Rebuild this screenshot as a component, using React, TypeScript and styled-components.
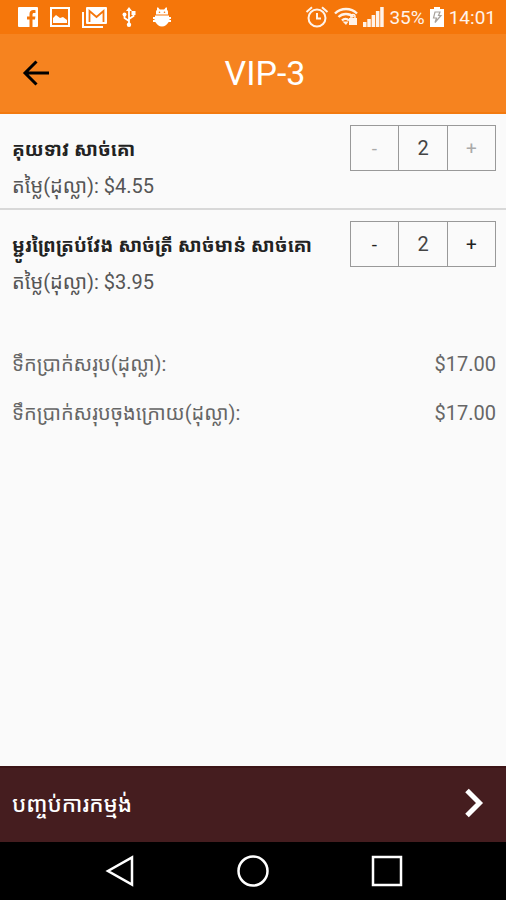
import React, { useState } from "react";
import styled, { createGlobalStyle } from "styled-components";

const GlobalStyle = createGlobalStyle`
  *, *::before, *::after { box-sizing: border-box; }
  html, body { margin: 0; padding: 0; }
  body {
    background: #fafafa;
    color: #555;
    font-family: Roboto, "Noto Sans Khmer", "Noto Sans", sans-serif;
  }
  button { font-family: inherit; cursor: pointer; }
`;

const Screen = styled.div`
  display: flex;
  flex-direction: column;
  min-height: 100vh;
`;

const StatusBar = styled.div`
  display: flex;
  align-items: center;
  justify-content: space-between;
  height: 34px;
  padding: 0 10px 0 18px;
  background: #f5760a;
  color: #fff3ea;
  font-size: 19px;
`;

const Notifications = styled.div`
  display: flex;
  align-items: center;
  gap: 12px;
`;

const SystemStatus = styled.div`
  display: flex;
  align-items: center;
  gap: 5px;
`;

const AppBar = styled.header`
  display: grid;
  grid-template-columns: 48px 1fr 24px;
  align-items: center;
  height: 80px;
  padding: 0 12px;
  background: #f6831f;
  border-bottom: 2px solid #f37a0f;
`;

const BackButton = styled.button`
  display: flex;
  align-items: center;
  justify-content: center;
  height: 48px;
  padding: 0;
  border: 0;
  background: none;
  color: #000;
`;

const Title = styled.h1`
  margin: 0;
  color: #fff;
  font-size: 34px;
  font-weight: 400;
  line-height: 40px;
  text-align: center;
`;

const Content = styled.main`
  flex: 1;
`;

const ItemList = styled.ul`
  margin: 0;
  padding: 0;
  list-style: none;
`;

const Item = styled.li`
  display: flex;
  align-items: flex-start;
  justify-content: space-between;
  height: 96px;
  padding: 11px 10px 0 12px;

  &:not(:last-child) { border-bottom: 2px solid #d8d8d8; }
`;

const ItemName = styled.h2`
  margin: 7px 0 0;
  color: #222;
  font-size: 19px;
  font-weight: 700;
  line-height: 36px;
  white-space: nowrap;
`;

const ItemPrice = styled.p`
  margin: 0;
  font-size: 20px;
  line-height: 36px;
`;

const Stepper = styled.div`
  display: flex;
  height: 46px;
  border: 1px solid #999;
`;

const StepButton = styled.button`
  width: 47px;
  padding: 0;
  border: 0;
  background: none;
  color: #222;
  font-size: 19px;

  &:disabled { color: #aaa; cursor: default; }
`;

const Quantity = styled.output`
  display: flex;
  align-items: center;
  justify-content: center;
  width: 50px;
  border: solid #999;
  border-width: 0 1px;
  color: #444;
  font-size: 20px;
`;

const Totals = styled.dl`
  display: flex;
  flex-direction: column;
  gap: 13px;
  margin: 0;
  padding: 40px 10px 0 12px;
  color: #666;
  font-size: 20px;
  line-height: 36px;
`;

const TotalRow = styled.div`
  display: flex;
  justify-content: space-between;
`;

const Amount = styled.dd`
  margin: 0;
`;

const FinishButton = styled.button`
  display: flex;
  align-items: center;
  justify-content: space-between;
  height: 76px;
  padding: 0 21px 4px 12px;
  border: 0;
  border-top: 2px solid #3c1416;
  background: #451d1f;
  color: #fff;
  font-size: 22px;
  font-weight: 500;
`;

const NavBar = styled.nav`
  display: flex;
  align-items: center;
  justify-content: center;
  gap: 86px;
  height: 58px;
  background: #000;
`;

const NavButton = styled.button`
  display: flex;
  align-items: center;
  justify-content: center;
  width: 48px;
  height: 48px;
  padding: 0;
  border: 0;
  background: none;
`;

const FacebookIcon = () => (
  <svg width="20" height="20" viewBox="0 0 20 20" aria-hidden="true">
    <path fill="#fff" d="M1 0h18a1 1 0 0 1 1 1v18a1 1 0 0 1-1 1h-4.500v-7.500h2.500l.4-3h-2.900V7.500c0-.9.400-1.500 1.500-1.500h1.500V3.300c-.4-.1-1.200-.2-2.100-.2-2.300 0-3.900 1.400-3.900 3.900v2.500H9v3h2.500V20H1a1 1 0 0 1-1-1V1a1 1 0 0 1 1-1z" />
  </svg>
);

const GalleryIcon = () => (
  <svg width="20" height="20" viewBox="0 0 20 20" aria-hidden="true">
    <rect x="1" y="1" width="18" height="18" fill="none" stroke="#fff" strokeWidth="2" />
    <path fill="#fff" d="M3 16v-5l3-3 4 3 3-1 4 3v3z" />
  </svg>
);

const MailIcon = () => (
  <svg width="25" height="21" viewBox="0 0 25 21" aria-hidden="true">
    <path d="M1 5v15h20" fill="none" stroke="#fff" strokeWidth="2" />
    <rect x="4" y="0" width="21" height="17" rx="1" fill="#fff" />
    <path d="M7.500 15V4l7 6 7-6v11" fill="none" stroke="#f5760a" strokeWidth="1.800" />
  </svg>
);

const UsbIcon = () => (
  <svg width="20" height="20" viewBox="-3 0 20 20" aria-hidden="true">
    <path d="M7 3v15M7 14L2.500 11V8M7 12l4.500-3V6" fill="none" stroke="#fff" strokeWidth="1.800" />
    <path d="M7 0l3 4H4z" fill="#fff" />
    <circle cx="2.500" cy="7.500" r="2" fill="#fff" />
    <rect x="9.500" y="4" width="4" height="4" fill="#fff" />
    <circle cx="7" cy="17.800" r="2.200" fill="#fff" />
  </svg>
);

const DebugIcon = () => (
  <svg width="22" height="20" viewBox="-2 0 22 20" aria-hidden="true">
    <path fill="#fff" d="M3 7.500V5c0-1 .4-1.600 1-2V.5h1.200L6.800 2.500h4.400L12.800.5H14V3c.6.4 1 1 1 2v2.500z" />
    <path fill="#fff" d="M2 8.500h14V10h2v2h-1.500v1H18v2h-2.300C14 17.500 12 19.500 9 19.500S4 17.500 2.300 15H0v-2h1.500v-1H0v-2h2z" />
    <circle cx="6.500" cy="5.200" r=".8" fill="#f5760a" />
    <circle cx="11.500" cy="5.200" r=".8" fill="#f5760a" />
  </svg>
);

const AlarmIcon = () => (
  <svg width="24" height="22" viewBox="0 0 24 22" fill="none" stroke="#fff3ea" strokeWidth="2" aria-hidden="true">
    <circle cx="12" cy="12" r="8.500" />
    <path d="M12 7v5.500h4M1.500 6L7 1.200M22.500 6L17 1.200" />
  </svg>
);

const WifiIcon = () => (
  <svg width="24" height="20" viewBox="0 0 24 20" aria-hidden="true">
    <path d="M1 6.500c6-6 16-6 22 0M4.500 10c4-4 11-4 15 0M8 13.500c2-2 5-2 7 0" fill="none" stroke="#fff3ea" strokeWidth="2.400" />
    <path d="M8.500 14.500h6L12 18z" fill="#fff3ea" />
    <rect x="15" y="11" width="8" height="7" fill="#fff3ea" />
    <path d="M17 11.500V9.500a2 2 0 0 1 4 0v2" fill="none" stroke="#fff3ea" strokeWidth="1.500" />
  </svg>
);

const SignalIcon = () => (
  <svg width="21" height="20" viewBox="0 0 21 20" fill="#fff3ea" aria-hidden="true">
    <path d="M0 15h3.500v5H0zM4.300 12h3.500v8H4.300zM8.600 8h3.500v12H8.600zM12.900 4h3.500v16h-3.500zM17.200 0h3.500v20h-3.500z" />
  </svg>
);

const BatteryIcon = () => (
  <svg width="14" height="20" viewBox="0 0 14 20" aria-hidden="true">
    <path fill="#fff" d="M4 0h6v2h4v18H0V2h4z" />
    <path d="M5 5h5L8.500 8.500H11L5 15.500 6.500 11H3.500z" fill="none" stroke="#a8a29c" strokeWidth="1.200" />
  </svg>
);

type Dish = { name: string; price: string; quantity: number; editable: boolean };

const dishes: Dish[] = [
  { name: "គុយទាវ សាច់គោ", price: "$4.55", quantity: 2, editable: false },
  { name: "ម្ជូរព្រៃត្រប់វែង សាច់ត្រី សាច់មាន់ សាច់គោ", price: "$3.95", quantity: 2, editable: true },
];

const totals = [
  { label: "ទឹកប្រាក់សរុប(ដុល្លា):", amount: "$17.00" },
  { label: "ទឹកប្រាក់សរុបចុងក្រោយ(ដុល្លា):", amount: "$17.00" },
];

function DishRow({ dish }: { dish: Dish }) {
  const [quantity, setQuantity] = useState(dish.quantity);
  return (
    <Item>
      <div>
        <ItemName>{dish.name}</ItemName>
        <ItemPrice>តម្លៃ(ដុល្លា): {dish.price}</ItemPrice>
      </div>
      <Stepper role="group" aria-label={dish.name}>
        <StepButton disabled={!dish.editable} onClick={() => setQuantity(Math.max(0, quantity - 1))}>-</StepButton>
        <Quantity>{quantity}</Quantity>
        <StepButton disabled={!dish.editable} onClick={() => setQuantity(quantity + 1)}>+</StepButton>
      </Stepper>
    </Item>
  );
}

export default function App() {
  return (
    <Screen>
      <GlobalStyle />
      <StatusBar>
        <Notifications>
          <FacebookIcon />
          <GalleryIcon />
          <MailIcon />
          <UsbIcon />
          <DebugIcon />
        </Notifications>
        <SystemStatus>
          <AlarmIcon />
          <WifiIcon />
          <SignalIcon />
          <span>35%</span>
          <BatteryIcon />
          <span>14:01</span>
        </SystemStatus>
      </StatusBar>
      <AppBar>
        <BackButton aria-label="Back">
          <svg width="28" height="28" viewBox="0 0 28 28" fill="none" stroke="currentColor" strokeWidth="3" aria-hidden="true">
            <path d="M27 14H3M14.500 2.500L3 14l11.500 11.500" />
          </svg>
        </BackButton>
        <Title>VIP-3</Title>
      </AppBar>
      <Content>
        <ItemList>
          {dishes.map((dish) => (
            <DishRow key={dish.name} dish={dish} />
          ))}
        </ItemList>
        <Totals>
          {totals.map((total) => (
            <TotalRow key={total.label}>
              <dt>{total.label}</dt>
              <Amount>{total.amount}</Amount>
            </TotalRow>
          ))}
        </Totals>
      </Content>
      <FinishButton>
        <span>បញ្ចប់ការកម្មង់</span>
        <svg width="22" height="30" viewBox="0 0 22 30" fill="none" stroke="#fff" strokeWidth="5" aria-hidden="true">
          <path d="M4 2.500L16.500 15 4 27.500" />
        </svg>
      </FinishButton>
      <NavBar>
        <NavButton aria-label="Back">
          <svg width="30" height="32" viewBox="0 0 30 32" fill="none" stroke="#fff" strokeWidth="2.500" aria-hidden="true">
            <path d="M28 2.500v27L4 16z" />
          </svg>
        </NavButton>
        <NavButton aria-label="Home">
          <svg width="32" height="32" viewBox="0 0 32 32" fill="none" stroke="#fff" strokeWidth="2.500" aria-hidden="true">
            <circle cx="16" cy="16" r="14.500" />
          </svg>
        </NavButton>
        <NavButton aria-label="Recent apps">
          <svg width="32" height="32" viewBox="0 0 32 32" fill="none" stroke="#fff" strokeWidth="2.500" aria-hidden="true">
            <rect x="2" y="2" width="28" height="28" />
          </svg>
        </NavButton>
      </NavBar>
    </Screen>
  );
}
